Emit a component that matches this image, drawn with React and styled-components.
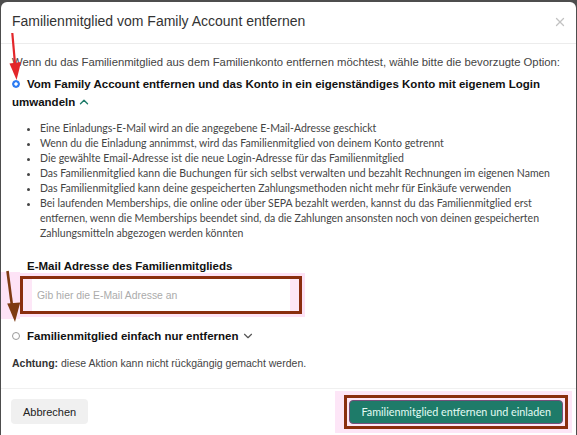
import React from "react";
import styled, { createGlobalStyle } from "styled-components";
import { ChevronUp, ChevronDown, X } from "lucide-react";

const GlobalStyle = createGlobalStyle`
  html, body {
    margin: 0;
    padding: 0;
  }
  body {
    background: #4d4d4d;
    font-family: "Liberation Sans", Arial, sans-serif;
    overflow: hidden;
  }
`;

const Page = styled.div`
  position: relative;
  width: 577px;
  height: 435px;
  padding: 2px 1px 0 1px;
  box-sizing: border-box;
  overflow: hidden;
`;

const Modal = styled.div`
  height: 100%;
  background: #fff;
  border-radius: 6px 6px 0 0;
  display: flex;
  flex-direction: column;
`;

const Header = styled.div`
  display: flex;
  align-items: center;
  justify-content: space-between;
  padding: 11px 9px 13px 11px;
  border-bottom: 1px solid #ececec;
`;

const Title = styled.h2`
  margin: 0;
  font-size: 14px;
  line-height: 17px;
  font-weight: 400;
  color: #333;
`;

const Close = styled.button`
  border: 0;
  background: none;
  padding: 0;
  display: flex;
  color: #c2c2c2;
  cursor: pointer;
`;

const Body = styled.div`
  flex: 1;
  padding: 11px 11px 0;
`;

const Intro = styled.p`
  margin: 0;
  font-size: 11.3px;
  line-height: 14px;
  color: #444;
`;

const Option = styled.label`
  display: block;
  margin-top: ${(p) => p.$top}px;
  font-size: 11.5px;
  line-height: 18px;
  font-weight: 700;
  color: #111;
  cursor: pointer;

  svg {
    vertical-align: -3px;
    margin-left: 2px;
  }
`;

const Radio = styled.span`
  display: inline-block;
  width: 8px;
  height: 8px;
  margin-right: 7px;
  border-radius: 50%;
  vertical-align: 0;
  box-sizing: border-box;
  border: 1px solid ${(p) => (p.$checked ? "#2a78f0" : "#9a9a9a")};
  background: ${(p) =>
    p.$checked
      ? "radial-gradient(circle, #fff 0 1.4px, #2f7ff5 1.9px)"
      : "#fff"};
`;

const Bullets = styled.ul`
  margin: 10px 0 0;
  padding-left: 28px;
  font-family: Lato, "Liberation Sans", sans-serif;
  font-size: 10.5px;
  line-height: 15px;
  color: #454545;
`;

const Field = styled.div`
  margin: 18px 0 0 15px;
`;

const FieldLabel = styled.div`
  font-size: 11.5px;
  line-height: 14px;
  font-weight: 700;
  color: #111;
`;

const Callout = styled.div`
  width: 282px;
  box-sizing: border-box;
  margin: 3px 0 0 -7px;
  padding: 0 9px;
  border: 3px solid #8a2e0e;
  background: #fde7f7;
  box-shadow: 0 0 0 3px #fde2f5;
`;

const Input = styled.input`
  display: block;
  width: 100%;
  height: 32px;
  box-sizing: border-box;
  border: 0;
  outline: none;
  padding: 0 5px;
  background: #fff;
  font-family: "Liberation Sans", Arial, sans-serif;
  font-size: 10.4px;
  color: #333;

  &::placeholder {
    color: #ababab;
  }
`;

const Note = styled.p`
  margin: 11px 0 0;
  font-size: 10.5px;
  line-height: 14px;
  color: #444;

  b {
    color: #333;
  }
`;

const Footer = styled.div`
  display: flex;
  align-items: center;
  justify-content: space-between;
  padding: 10px 13px 11px 10px;
  border-top: 1px solid #f0f0f0;
`;

const Button = styled.button`
  height: ${(p) => (p.$primary ? 24 : 25)}px;
  padding: 0 ${(p) => (p.$primary ? 11 : 12)}px;
  border-radius: 4px;
  border: ${(p) => (p.$primary ? "1px solid #74507a" : "0")};
  background: ${(p) => (p.$primary ? "#1e7b69" : "#f0f0f0")};
  color: ${(p) => (p.$primary ? "#e4fbf4" : "#222")};
  font-family: ${(p) =>
    p.$primary
      ? 'Lato, "Liberation Sans", sans-serif'
      : '"Liberation Sans", Arial, sans-serif'};
  font-size: ${(p) => (p.$primary ? 10.8 : 11)}px;
  cursor: pointer;
`;

const ButtonFrame = styled.span`
  display: inline-flex;
  margin: -5px;
  padding: 2px;
  border: 3px solid #8a2e0e;
  background: #fde6f7;
  box-shadow: 0 0 0 4px #fde6f7, -5px 0 0 4px #fde6f7;
`;

const Marks = styled.svg`
  position: absolute;
  inset: 0;
  pointer-events: none;
`;

const items = [
  "Eine Einladungs-E-Mail wird an die angegebene E-Mail-Adresse geschickt",
  "Wenn du die Einladung annimmst, wird das Familienmitglied von deinem Konto getrennt",
  "Die gewählte Email-Adresse ist die neue Login-Adresse für das Familienmitglied",
  "Das Familienmitglied kann die Buchungen für sich selbst verwalten und bezahlt Rechnungen im eigenen Namen",
  "Das Familienmitglied kann deine gespeicherten Zahlungsmethoden nicht mehr für Einkäufe verwenden",
  "Bei laufenden Memberships, die online oder über SEPA bezahlt werden, kannst du das Familienmitglied erst entfernen, wenn die Memberships beendet sind, da die Zahlungen ansonsten noch von deinen gespeicherten Zahlungsmitteln abgezogen werden könnten",
];

export default function App() {
  return (
    <Page>
      <GlobalStyle />
      <Modal>
        <Header>
          <Title>Familienmitglied vom Family Account entfernen</Title>
          <Close aria-label="Schließen">
            <X size={14} strokeWidth={2.2} />
          </Close>
        </Header>
        <Body>
          <Intro>
            Wenn du das Familienmitglied aus dem Familienkonto entfernen möchtest,
            wähle bitte die bevorzugte Option:
          </Intro>
          <Option $top={6}>
            <Radio $checked />
            Vom Family Account entfernen und das Konto in ein eigenständiges Konto
            mit eigenem Login umwandeln
            <ChevronUp size={14} strokeWidth={2.4} color="#1e7b69" />
          </Option>
          <Bullets>
            {items.map((t) => (
              <li key={t}>{t}</li>
            ))}
          </Bullets>
          <Field>
            <FieldLabel>E-Mail Adresse des Familienmitglieds</FieldLabel>
            <Callout>
              <Input placeholder="Gib hier die E-Mail Adresse an" />
            </Callout>
          </Field>
          <Option $top={13}>
            <Radio />
            Familienmitglied einfach nur entfernen
            <ChevronDown size={14} strokeWidth={2} color="#555" />
          </Option>
          <Note>
            <b>Achtung:</b> diese Aktion kann nicht rückgängig gemacht werden.
          </Note>
        </Body>
        <Footer>
          <Button>Abbrechen</Button>
          <ButtonFrame>
            <Button $primary>Familienmitglied entfernen und einladen</Button>
          </ButtonFrame>
        </Footer>
      </Modal>
      <Marks width="577" height="435" viewBox="0 0 577 435">
        <rect x="1" y="272" width="19" height="47" fill="#fde3f6" />
        <line x1="12.3" y1="33" x2="15.2" y2="66" stroke="#e3262a" strokeWidth="2.2" />
        <polygon points="9.5,63.5 21,62 16.6,80" fill="#e3262a" />
        <line x1="7.5" y1="271" x2="12" y2="306" stroke="#7e3a12" strokeWidth="2.6" />
        <polygon points="7.2,303.5 20.2,302.5 15,322" fill="#7e3a12" />
      </Marks>
    </Page>
  );
}
